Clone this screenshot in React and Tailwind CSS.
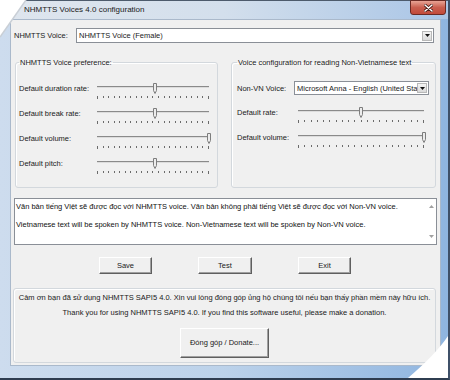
import React from "react";

function Thumb() {
  return (
    <svg width="6" height="11" viewBox="0 0 6 11" className="block">
      <path d="M1.5 0.5 H4.5 V7.5 L3 10.5 L1.5 7.5 Z" fill="#ececec" stroke="#7d7d7d" strokeWidth="1" />
    </svg>
  );
}

function Slider({ className, pos }) {
  const ticks = Array.from({ length: 21 });
  return (
    <div className={"relative h-[16px] pt-[2px] " + className}>
      <div className="h-[2px] border-t border-[#8a8a8a] bg-[#dcdcdc]" />
      <div className="mt-[8px] flex justify-between">
        {ticks.map((_, i) => (
          <div
            key={i}
            className={
              i === 0 || i === 20
                ? "w-[1px] h-[3px] bg-[#6b6b6b]"
                : "w-[1px] h-[2px] bg-[#6b6b6b]"
            }
          />
        ))}
      </div>
      <div className="absolute top-[-1px]" style={{ left: `calc(${pos * 100}% - 3px)` }}>
        <Thumb />
      </div>
    </div>
  );
}

function DropBtn() {
  return (
    <div className="w-[10px] h-[10px] mr-[1px] flex items-center justify-center border border-[#b8b8b8] bg-gradient-to-b from-[#f4f4f4] to-[#d9d9d9]">
      <svg width="5" height="3" viewBox="0 0 5 3">
        <path d="M0 0 H5 L2.5 3 Z" fill="#111" />
      </svg>
    </div>
  );
}

function Btn({ children, className }) {
  return (
    <div
      className={
        "flex items-center justify-center bg-[#f0f0f0] border border-t-white border-l-white border-r-[#5f5f5f] border-b-[#5f5f5f] shadow-[inset_-1px_-1px_0_#a0a0a0] text-[7.5px] text-[#1a1a1a] " +
        className
      }
    >
      {children}
    </div>
  );
}

export default function App() {
  return (
    <div className="relative w-[450px] h-[380px] overflow-hidden bg-gradient-to-r from-[#cddcee] via-[#bcd2ea] to-[#8fb5e0] border-r-[2px] border-r-[#3f5068] border-b-[2px] border-b-[#2f3d50] font-['Liberation_Sans',Arial,sans-serif] text-[#1a1a1a]">
      {/* Title bar */}
      <div className="h-[19px] flex items-start border-t border-[#4d5b6c] bg-gradient-to-r from-[#dfe6ee] via-[#d3dfec] to-[#a9c5e6]">
        <span className="pl-[24px] pt-[4px] text-[8px] leading-[10px] text-[#1b1b1b]">
          NHMTTS Voices 4.0 configuration
        </span>
        <div className="ml-auto mr-[2px] mt-[-1px] w-[36px] h-[15px] rounded-b-[3px] border border-[#6b2a24] bg-gradient-to-b from-[#e8a395] via-[#c95e4f] to-[#c24a3a] flex items-center justify-center">
          <svg width="9" height="8" viewBox="0 0 9 8">
            <path d="M1 1 L8 7 M8 1 L1 7" stroke="#4a1a14" strokeWidth="3" strokeLinecap="round" />
            <path d="M1 1 L8 7 M8 1 L1 7" stroke="#ffffff" strokeWidth="1.5" strokeLinecap="round" />
          </svg>
        </div>
      </div>

      {/* Client area */}
      <div className="ml-[10px] w-[431px] h-[347px] bg-[#f0f0f0] border border-[#aab9cb] flex flex-col">
        {/* Voice combo row */}
        <div className="mt-[8px] flex items-center h-[15px]">
          <span className="ml-[3px] w-[62px] text-[7.5px] leading-[9px]">NHMTTS Voice:</span>
          <div className="w-[358px] h-[15px] bg-white border border-[#8a8f97] flex items-center">
            <span className="pl-[2px] text-[7.5px] leading-[9px]">NHMTTS Voice (Female)</span>
            <div className="ml-auto">
              <DropBtn />
            </div>
          </div>
        </div>

        {/* Group boxes */}
        <div className="mt-[15px] flex h-[130px]">
          <fieldset className="ml-[4px] w-[203px] h-[130px] border border-[#d3d8dd] rounded-[3px] shadow-[inset_1px_1px_0_#fff]">
            <legend className="ml-[3px] px-[1px] text-[7.5px] leading-[9px]">NHMTTS Voice preference:</legend>
            <div className="pl-[3px] pt-[17px] flex flex-col">
              {[
                ["Default duration rate:", 0.52],
                ["Default break rate:", 0.52],
                ["Default volume:", 1],
                ["Default pitch:", 0.52],
              ].map(([label, pos]) => (
                <div key={label} className="flex h-[25px]">
                  <span className="w-[78px] text-[7.5px] leading-[9px]">{label}</span>
                  <Slider className="w-[112px]" pos={pos} />
                </div>
              ))}
            </div>
          </fieldset>

          <fieldset className="ml-[13px] w-[205px] h-[130px] border border-[#d3d8dd] rounded-[3px] shadow-[inset_1px_1px_0_#fff]">
            <legend className="ml-[5px] px-[1px] text-[7.5px] leading-[9px]">
              Voice configuration for reading Non-Vietnamese text
            </legend>
            <div className="pl-[5px] pt-[14px] flex flex-col">
              <div className="flex items-center h-[14px]">
                <span className="w-[57px] text-[7.5px] leading-[9px]">Non-VN Voice:</span>
                <div className="w-[135px] h-[14px] bg-white border border-[#8a8f97] flex items-center">
                  <span className="pl-[2px] text-[7.5px] leading-[9px] whitespace-nowrap flex-1">
                    Microsoft Anna - English (United Sta
                  </span>
                  <DropBtn />
                </div>
              </div>
              <div className="mt-[13px] flex h-[25px]">
                <span className="w-[61px] text-[7.5px] leading-[9px]">Default rate:</span>
                <Slider className="w-[126px]" pos={0.5} />
              </div>
              <div className="flex h-[25px]">
                <span className="w-[61px] text-[7.5px] leading-[9px]">Default volume:</span>
                <Slider className="w-[126px]" pos={1} />
              </div>
            </div>
          </fieldset>
        </div>

        {/* Text area */}
        <div className="mt-[10px] ml-[3px] w-[423px] h-[47px] bg-white border border-[#8a8f97] flex">
          <div className="flex-1 pl-[1px] pt-[3px] text-[7.5px] leading-[9px] text-[#111]">
            <p>Văn bản tiếng Việt sẽ được đọc với NHMTTS voice. Văn bản không phải tiếng Việt sẽ được đọc với Non-VN voice.</p>
            <p className="mt-[9px]">Vietnamese text will be spoken by NHMTTS voice. Non-Vietnamese text will be spoken by Non-VN voice.</p>
          </div>
          <div className="w-[10px] flex flex-col items-center justify-between py-[6px]">
            <svg width="5" height="3" viewBox="0 0 5 3">
              <path d="M0 3 H5 L2.5 0 Z" fill="#a0a0a0" />
            </svg>
            <svg width="5" height="3" viewBox="0 0 5 3">
              <path d="M0 0 H5 L2.5 3 Z" fill="#a0a0a0" />
            </svg>
          </div>
        </div>

        {/* Buttons */}
        <div className="mt-[12px] flex h-[17px]">
          <Btn className="ml-[88px] w-[53px] h-[17px]">Save</Btn>
          <Btn className="ml-[46px] w-[54px] h-[17px]">Test</Btn>
          <Btn className="ml-[46px] w-[53px] h-[17px]">Exit</Btn>
        </div>

        {/* Donation group */}
        <fieldset className="mt-[14px] ml-[2px] w-[423px] h-[75px] border border-[#d3d8dd] rounded-[3px] shadow-[inset_1px_1px_0_#fff] flex flex-col items-center">
          <div className="pt-[4px] flex flex-col items-center gap-[6px] text-[7.5px] leading-[9px]">
            <p className="whitespace-nowrap">
              Cảm ơn bạn đã sử dụng NHMTTS SAPI5 4.0. Xin vui lòng đóng góp ủng hộ chúng tôi nếu bạn thấy phần mềm này hữu ích.
            </p>
            <p className="whitespace-nowrap">
              Thank you for using NHMTTS SAPI5 4.0. If you find this software useful, please make a donation.
            </p>
          </div>
          <Btn className="mt-[11px] w-[89px] h-[30px]">Đóng góp / Donate...</Btn>
        </fieldset>
      </div>

      {/* Cut corners of the photographed screenshot */}
      <svg className="absolute left-0 top-0" width="30" height="40" viewBox="0 0 30 40">
        <path d="M0 0 H26 L0 37 Z" fill="#ffffff" />
        <path d="M26 0 L0 37" stroke="#c9cfd6" strokeWidth="1.5" />
      </svg>
      <svg className="absolute right-0 bottom-0" width="42" height="46" viewBox="0 0 42 46">
        <path d="M42 4 Q30 22 2 46 H42 Z" fill="#ffffff" />
      </svg>
    </div>
  );
}
